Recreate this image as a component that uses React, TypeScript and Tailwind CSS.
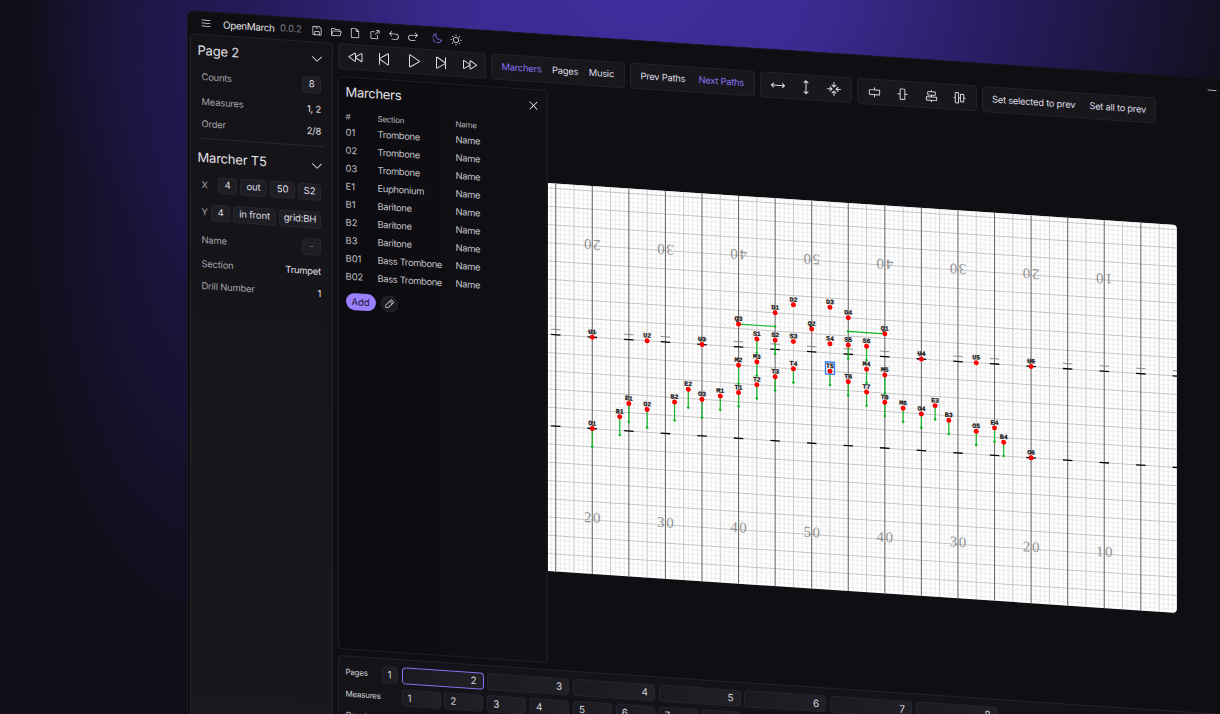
import React from "react";
import {
  PiList, PiFloppyDisk, PiFolderOpen, PiFile, PiArrowSquareOut, PiArrowUUpLeft, PiArrowUUpRight, PiMoon, PiSun, PiMinus,
  PiCaretDown, PiRewind, PiSkipBack, PiPlay, PiSkipForward, PiFastForward, PiArrowsHorizontal, PiArrowsVertical,
  PiArrowsInCardinal, PiAlignCenterHorizontalSimple, PiAlignCenterVerticalSimple, PiAlignCenterHorizontal,
  PiAlignCenterVertical, PiX, PiPencilSimple,
} from "react-icons/pi";

type Marcher = [label: string, x: number, y: number, toX?: number, toY?: number];

/* Positions in 8-to-5 steps: x from the 50 yard line, y from the back sideline. */
const marchers: Marcher[] = [
  ["U1", -48, 32], ["U2", -36, 32], ["U3", -24, 32], ["U4", 24, 32], ["U5", 36, 32], ["U6", 48, 32],
  ["Q3", -16, 27, -8, 27], ["Q2", 0, 27], ["Q1", 16, 27, 8, 27],
  ["D1", -8, 24], ["D2", -4, 22], ["D3", 4, 22], ["D4", 8, 24],
  ["S1", -12, 30, -12, 33], ["S2", -8, 30, -8, 33], ["S3", -4, 30], ["S4", 4, 30], ["S5", 8, 30, 8, 33], ["S6", 12, 30, 12, 33],
  ["M3", -12, 35, -12, 38], ["M2", -16, 36, -16, 40], ["T1", -16, 42, -16, 45], ["T2", -12, 40, -12, 43],
  ["T3", -8, 38, -8, 41], ["T4", -4, 36, -4, 39], ["T5", 4, 36, 4, 39], ["T6", 8, 38, 8, 41],
  ["M4", 12, 35, 12, 38], ["T7", 12, 40, 12, 43], ["M5", 16, 36, 16, 40], ["T8", 16, 42, 16, 45],
  ["M6", 20, 43, 20, 46], ["O4", 24, 44, 24, 47], ["E3", 27, 42, 27, 45], ["B3", 30, 45, 30, 48],
  ["O5", 36, 47, 36, 50], ["E4", 40, 46, 40, 49], ["B4", 42, 49, 42, 52], ["O6", 48, 52],
  ["M1", -20, 43, -20, 46], ["O3", -24, 44, -24, 48], ["E2", -27, 42, -27, 46], ["B2", -30, 45, -30, 49],
  ["O2", -36, 47, -36, 51], ["B1", -42, 49, -42, 53], ["E1", -40, 46, -40, 50], ["O1", -48, 52, -48, 56],
];

const STEP = 4.571;
const px = (k: number) => 263.7 + k * STEP;
const py = (n: number) => 4.9 + n * STEP;
const range = (a: number, b: number) => Array.from({ length: b - a + 1 }, (_, i) => a + i);

function Field() {
  return (
    <svg width="629" height="388" className="block rounded-r-[4px] bg-white">
      {range(-57, 80).map((k) =>
        k % 8 === 0 ? null : (
          <line key={k} x1={px(k)} x2={px(k)} y1="0" y2="388" stroke={k % 4 === 0 ? "#bcbcbc" : "#e3e3e3"} strokeWidth={k % 4 === 0 ? 0.9 : 0.7} />
        ))}
      {range(-1, 83).map((n) => (
        <line key={n} x1="0" x2="629" y1={py(n)} y2={py(n)} stroke={n % 4 === 0 ? "#c6c6c6" : "#e8e8e8"} strokeWidth={n % 4 === 0 ? 1 : 0.7} />
      ))}
      {range(-7, 10).map((i) => (
        <g key={i}>
          <line x1={px(i * 8)} x2={px(i * 8)} y1="0" y2="388" stroke="#6d6d6d" strokeWidth="1.1" />
          <line x1={px(i * 8) - 4.6} x2={px(i * 8) + 4.6} y1={py(30.85)} y2={py(30.85)} stroke="#777" strokeWidth="0.8" />
          <line x1={px(i * 8) - 4.7} x2={px(i * 8) + 4.7} y1={py(32)} y2={py(32)} stroke="#000" strokeWidth="1.3" />
          <line x1={px(i * 8) - 4.7} x2={px(i * 8) + 4.7} y1={py(52)} y2={py(52)} stroke="#000" strokeWidth="1.3" />
        </g>
      ))}
      {[20, 30, 40, 50, 40, 30, 20, 10].map((yard, i) => {
        const x = px(-48 + i * 16);
        return (
          <g key={i} fontFamily="'Liberation Serif', serif" fontSize="15" letterSpacing="1.6" fill="#939393" textAnchor="middle">
            <text x={x + 0.8} y={336.5}>{yard}</text>
            <text x={x + 0.8} y={64} transform={`rotate(180 ${x} 58.8)`}>{yard}</text>
          </g>
        );
      })}
      {marchers.map(([label, x, y, toX, toY]) => (
        <g key={label}>
          {toX !== undefined && toY !== undefined && (
            <>
              <line x1={px(x)} y1={py(y)} x2={px(toX)} y2={py(toY)} stroke="#14b428" strokeWidth="1.2" />
              <circle cx={px(toX)} cy={py(toY)} r="1.3" fill="#14b428" />
            </>
          )}
        </g>
      ))}
      {marchers.map(([label, x, y]) => (
        <g key={label}>
          <circle cx={px(x)} cy={py(y)} r="2.5" fill="#ff0000" />
          <text x={px(x)} y={py(y) - 3.2} textAnchor="middle" fontFamily="'Liberation Mono', monospace" fontWeight="700" fontSize="6.6" fill="#111" stroke="#111" strokeWidth="0.2">{label}</text>
        </g>
      ))}
      <rect x={px(4) - 4.5} y={py(36) - 9.2} width="9" height="12" fill="none" stroke="#2b7cf0" strokeWidth="1.3" />
    </svg>
  );
}

const box = "flex items-center justify-center rounded-[4px] border border-[#27262d] bg-[#1f1e24] h-[17px] text-[9.6px] text-[#dcdbe0]";
const group = "flex h-[26px] items-center rounded-[4px] border border-[#232228] bg-[#18171c]";

function Row({ label, value }: { label: string; value: string }) {
  return (
    <div className="flex h-[11px] items-center justify-between">
      <span className="text-[#a5a4ab]">{label}</span>
      <span>{value}</span>
    </div>
  );
}

function Sidebar() {
  return (
    <aside className="h-[760px] w-[142.5px] shrink-0 rounded-[4px] border border-[#242329] bg-linear-to-b from-[#141318] to-[#19181e] px-[6.5px] pt-[6.5px] text-[9.4px] tracking-[-0.2px]">
      <div className="flex h-[18px] items-center justify-between pr-px">
        <h2 className="text-[13px]">Page 2</h2>
        <PiCaretDown size={14} />
      </div>
      <div className="mt-[9px] flex flex-col gap-[10.8px] px-[4px]">
        <div className="flex h-[17px] items-center justify-between">
          <span className="text-[#a5a4ab]">Counts</span>
          <span className={`${box} w-[19px]`}>8</span>
        </div>
        <Row label="Measures" value="1, 2" />
        <Row label="Order" value="2/8" />
      </div>
      <div className="mt-[9px] mb-[10px] h-px bg-[#29282e]" />
      <div className="flex h-[18px] items-center justify-between pr-px">
        <h2 className="text-[13px]">Marcher T5</h2>
        <PiCaretDown size={14} />
      </div>
      <div className="mt-[9px] flex flex-col gap-[10.5px] px-[4px]">
        <div className="flex h-[17px] items-center gap-[3px]">
          <span className="mr-auto text-[#a5a4ab]">X</span>
          <span className={`${box} w-[19px]`}>4</span>
          <span className={`${box} w-[27px]`}>out</span>
          <span className={`${box} w-[25px]`}>50</span>
          <span className={`${box} w-[23px]`}>S2</span>
        </div>
        <div className="flex h-[17px] items-center gap-[3px]">
          <span className="mr-auto text-[#a5a4ab]">Y</span>
          <span className={`${box} w-[19px]`}>4</span>
          <span className={`${box} w-[43px]`}>in front</span>
          <span className={`${box} w-[42px]`}>grid:BH</span>
        </div>
        <div className="flex h-[17px] items-center justify-between">
          <span className="text-[#a5a4ab]">Name</span>
          <span className={`${box} w-[19px]`}><span className="text-[#77767d]">-</span></span>
        </div>
        <Row label="Section" value="Trumpet" />
        <Row label="Drill Number" value="1" />
      </div>
    </aside>
  );
}

const roster = [
  ["01", "Trombone"], ["02", "Trombone"], ["03", "Trombone"], ["E1", "Euphonium"], ["B1", "Baritone"],
  ["B2", "Baritone"], ["B3", "Baritone"], ["B01", "Bass Trombone"], ["B02", "Bass Trombone"],
];

function MarchersPanel() {
  return (
    <section className="h-[573px] w-[210px] shrink-0 rounded-[4px] border border-[#1f1e24] bg-linear-to-r from-[#0c0b10] to-[#111015] px-[6.5px] pt-[5.5px]">
      <div className="flex h-[19px] items-center justify-between">
        <h2 className="text-[13px] tracking-[-0.3px]">Marchers</h2>
        <PiX size={13} className="mr-px" />
      </div>
      <div className="mt-[8px] grid h-[12px] grid-cols-[32px_78px_1fr] items-center text-[8px] tracking-[-0.25px] text-[#b5b4ba]">
        <span>#</span><span>Section</span><span>Name</span>
      </div>
      <div className="mt-[1.8px] text-[9.4px] tracking-[-0.35px] text-[#c3c2c8]">
        {roster.map(([id, section]) => (
          <div key={id} className="grid h-[18px] grid-cols-[32px_78px_1fr] items-center">
            <span className="tracking-normal">{id}</span><span>{section}</span><span>Name</span>
          </div>
        ))}
      </div>
      <div className="mt-[6.5px] flex items-center gap-[5px]">
        <button className="h-[17px] w-[30px] rounded-full bg-[#9a80ff] text-[9.6px] leading-none tracking-[-0.2px] text-[#1a1530]">Add</button>
        <button className="flex size-[17px] items-center justify-center rounded-full border border-[#29282e] bg-[#1c1b21]"><PiPencilSimple size={11} /></button>
      </div>
    </section>
  );
}

function Toolbar() {
  return (
    <div className="flex gap-[5px] text-[9.4px] tracking-[-0.26px] text-[#dddce2]">
      <div className={`${group} w-[148px] justify-between pr-[8px] pl-[9px]`}>
        <PiRewind size={16} /><PiSkipBack size={16} /><PiPlay size={16} /><PiSkipForward size={16} /><PiFastForward size={16} />
      </div>
      <div className={`${group} w-[134px] justify-between pr-[10px] pl-[9.5px]`}>
        <span className="text-[#8a70f0]">Marchers</span><span>Pages</span><span>Music</span>
      </div>
      <div className={`${group} w-[125px] justify-between pr-[10px] pl-[9.5px]`}>
        <span>Prev Paths</span><span className="text-[#8a70f0]">Next Paths</span>
      </div>
      <div className={`${group} w-[92px] justify-between px-[9px]`}>
        <PiArrowsHorizontal size={16} /><PiArrowsVertical size={16} /><PiArrowsInCardinal size={16} />
      </div>
      <div className={`${group} w-[120px] justify-between px-[9px]`}>
        <PiAlignCenterHorizontalSimple size={15} /><PiAlignCenterVerticalSimple size={15} /><PiAlignCenterHorizontal size={15} /><PiAlignCenterVertical size={15} />
      </div>
      <div className={`${group} w-[174px] justify-between px-[9px]`}>
        <span>Set selected to prev</span><span>Set all to prev</span>
      </div>
    </div>
  );
}

function Timeline() {
  const cell = "flex h-[17px] shrink-0 items-center rounded-[4px] border bg-linear-to-r from-[#1b1a20] to-[#212026]";
  return (
    <section className="flex h-[120px] w-[900px] flex-col gap-[5px] overflow-hidden rounded-[4px] border border-[#242329] bg-[#141318] px-[6.5px] pt-[7px] text-[10px] text-[#d3d2d8]">
      <div className="flex h-[17px] items-center">
        <span className="w-[36px] text-[8px] tracking-[-0.25px]">Pages</span>
        <div className={`${cell} mr-[4px] w-[16px] justify-center border-[#27262d]`}>1</div>
        <div className="flex gap-[3.7px]">
          {range(2, 8).map((n) => (
            <div key={n} className={`${cell} w-[82px] justify-end pr-[6px] ${n === 2 ? "border-[#8a70f0]" : "border-[#27262d]"}`}>{n}</div>
          ))}
        </div>
      </div>
      <div className="flex h-[17px] items-center">
        <span className="w-[56px] text-[8px] tracking-[-0.25px]">Measures</span>
        <div className="flex gap-[3.85px]">
          {range(1, 8).map((n) => (
            <div key={n} className={`${cell} w-[39px] border-[#27262d] pl-[5px]`}>{n}</div>
          ))}
        </div>
      </div>
      <div className="flex h-[14px] items-center">
        <span className="w-[57px] text-[8px] tracking-[-0.25px]">Counts</span>
        <div className="flex gap-[2.7px]">
          {range(1, 32).map((n) => (
            <div key={n} className="size-[8px] shrink-0 rounded-full border border-[#25242b]" />
          ))}
        </div>
      </div>
    </section>
  );
}

export default function App() {
  return (
    <div className="h-[714px] w-[1220px] overflow-hidden bg-[#100e17] bg-[radial-gradient(ellipse_620px_420px_at_640px_-10px,#412d9d_0%,#3b2a90_30%,#241b5a_62%,transparent_100%),radial-gradient(ellipse_190px_460px_at_200px_200px,#1d1547_0%,transparent_100%)] pt-[10px] pl-[187px] font-['Inter',sans-serif] text-[#e2e1e6]">
      <div className="h-[860px] w-[1120px] origin-top-left rounded-[7px] border border-[#17161c] bg-[#0f0e12] [transform:skewY(3.81deg)]">
        <header className="flex h-[22px] items-center pl-[12px]">
          <PiList size={12} />
          <span className="ml-[11px] w-[57px] text-[9.9px] tracking-[-0.35px]">OpenMarch</span>
          <span className="w-[31px] text-[9.6px] tracking-[-0.2px] text-[#77767d]">0.0.2</span>
          <div className="flex w-[120px] gap-[7.2px]">
            <PiFloppyDisk size={12} /><PiFolderOpen size={12} /><PiFile size={12} /><PiArrowSquareOut size={12} /><PiArrowUUpLeft size={12} /><PiArrowUUpRight size={12} />
          </div>
          <PiMoon size={12} className="mr-[7px] text-[#8a70f0]" />
          <PiSun size={12} />
          <PiMinus size={12} className="ml-[743.5px]" />
        </header>
        <div className="flex gap-[5.5px] pl-[2px]">
          <Sidebar />
          <div className="flex flex-col">
            <Toolbar />
            <main className="mt-[7px] flex">
              <MarchersPanel />
              <div className="pt-[93px]"><Field /></div>
            </main>
            <div className="mt-[5.5px]"><Timeline /></div>
          </div>
        </div>
      </div>
    </div>
  );
}
